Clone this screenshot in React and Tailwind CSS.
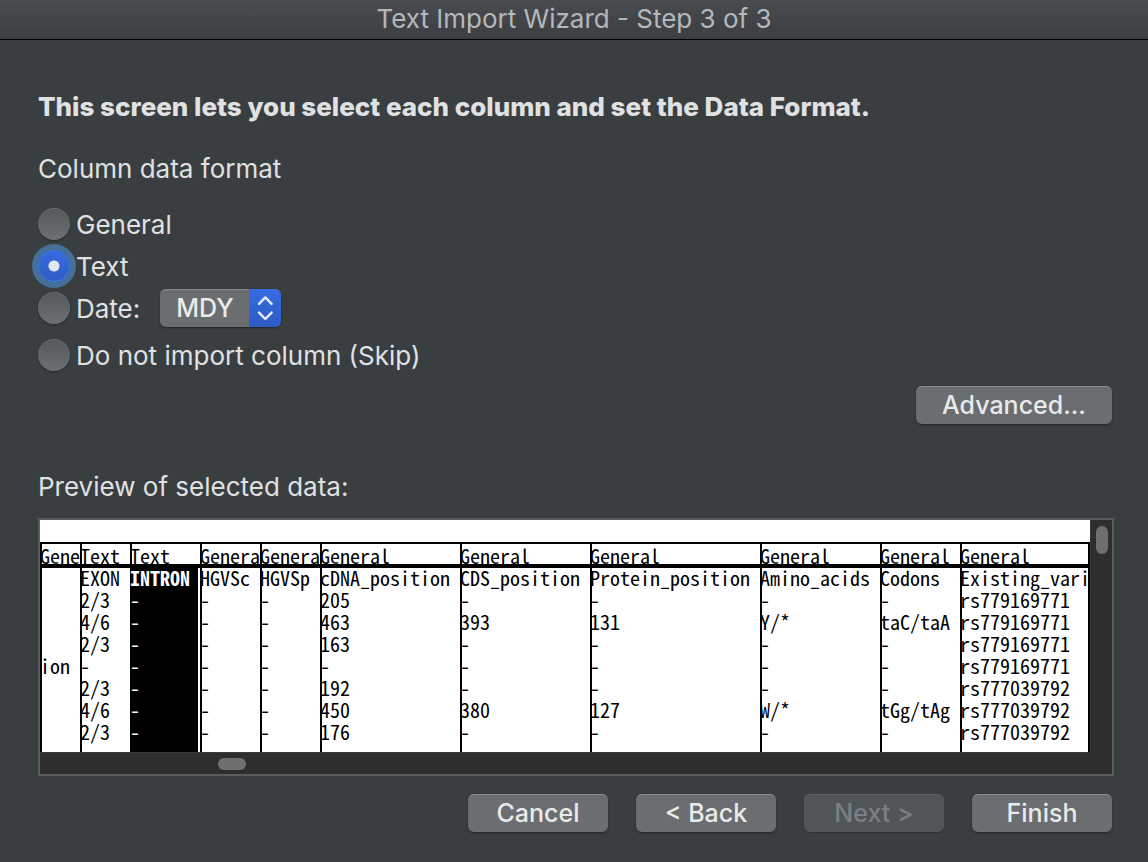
import { useState } from "react";

const columns = [
  { type: "General", width: "w-[40px]", cells: ["", "", "", "", "ion", "", "", ""], narrow: true },
  { type: "Text", width: "w-[50px]", cells: ["EXON", "2/3", "4/6", "2/3", "-", "2/3", "4/6", "2/3"] },
  { type: "Text", width: "w-[70px]", cells: ["INTRON", "-", "-", "-", "-", "-", "-", "-"], selected: true },
  { type: "General", width: "w-[60px]", cells: ["HGVSc", "-", "-", "-", "-", "-", "-", "-"], narrow: true },
  { type: "General", width: "w-[60px]", cells: ["HGVSp", "-", "-", "-", "-", "-", "-", "-"], narrow: true },
  { type: "General", width: "w-[140px]", cells: ["cDNA_position", "205", "463", "163", "-", "192", "450", "176"] },
  { type: "General", width: "w-[130px]", cells: ["CDS_position", "-", "393", "-", "-", "-", "380", "-"] },
  { type: "General", width: "w-[170px]", cells: ["Protein_position", "-", "131", "-", "-", "-", "127", "-"] },
  { type: "General", width: "w-[120px]", cells: ["Amino_acids", "-", "Y/*", "-", "-", "-", "W/*", "-"] },
  { type: "General", width: "w-[80px]", cells: ["Codons", "-", "taC/taA", "-", "-", "-", "tGg/tAg", "-"] },
  {
    type: "General",
    width: "",
    cells: ["Existing_vari", "rs779169771", "rs779169771", "rs779169771", "rs779169771", "rs777039792", "rs777039792", "rs777039792"],
  },
];

const rowCount = 8;

function Radio({ id, label, checked, onSelect }) {
  return (
    <div className="flex h-8 items-center gap-[6px]">
      <input
        id={id}
        type="radio"
        name="format"
        checked={checked}
        onChange={onSelect}
        className="size-8 shrink-0 appearance-none rounded-full bg-linear-to-b from-[#54585a] to-[#6e7173] shadow-[0_1px_2px_rgba(0,0,0,0.35),inset_0_1px_0_rgba(255,255,255,0.12)] checked:bg-[radial-gradient(circle,#dfe6f8_0_5px,transparent_6px),linear-gradient(#366be0,#2f5cc6)] checked:shadow-[inset_0_0_0_1px_#3f7fe6,0_0_0_6px_#44709a]"
      />
      <label htmlFor={id} className="pt-[2px]">
        {label}
      </label>
    </div>
  );
}

function PushButton({ children, className, disabled }) {
  const tone = disabled
    ? "bg-[#505558] text-[#7b7f82] shadow-[0_1px_1px_rgba(0,0,0,0.2),inset_0_1px_0_#5b6063]"
    : "bg-[#6a6e70] text-[#e9eaea] shadow-[0_1px_2px_rgba(0,0,0,0.4),inset_0_2px_0_-1px_#8a8d8f]";
  return (
    <button type="button" disabled={disabled} className={`h-[38px] rounded-md text-[25px] font-medium ${tone} ${className}`}>
      {children}
    </button>
  );
}

function PreviewTable() {
  return (
    <table className="h-full w-full table-fixed border-collapse font-['Noto_Sans_Mono_CJK_SC','DejaVu_Sans_Mono',monospace] text-[20px] leading-[20px] font-normal text-black">
      <colgroup>
        {columns.map((c, i) => (
          <col key={i} className={c.width} />
        ))}
      </colgroup>
      <thead>
        <tr className="h-[26px]">
          {columns.map((c, i) => (
            <th
              key={i}
              scope="col"
              className={`p-0 pt-1 text-left align-top font-normal whitespace-nowrap shadow-[inset_2px_2px_0_#000,inset_0_-4px_0_#000] last:shadow-[inset_2px_2px_0_#000,inset_-2px_-4px_0_#000] ${c.narrow ? "overflow-hidden" : ""}`}
            >
              {c.type}
            </th>
          ))}
        </tr>
      </thead>
      <tbody>
        {Array.from({ length: rowCount }, (_, r) => (
          <tr key={r} className="h-[22px]">
            {columns.map((c, i) => (
              <td
                key={i}
                className={
                  c.selected
                    ? `bg-black p-0 align-top whitespace-nowrap text-white shadow-[inset_-2px_0_0_#fff] ${r === 0 ? "font-bold" : ""}`
                    : "p-0 align-top whitespace-nowrap shadow-[inset_2px_0_0_#000] last:shadow-[inset_2px_0_0_#000,inset_-2px_0_0_#000]"
                }
              >
                {c.cells[r]}
              </td>
            ))}
          </tr>
        ))}
        <tr className="h-2">
          {columns.map((c, i) => (
            <td
              key={i}
              className={
                c.selected
                  ? "bg-black p-0 shadow-[inset_-2px_0_0_#fff]"
                  : "p-0 shadow-[inset_2px_0_0_#000] last:shadow-[inset_2px_0_0_#000,inset_-2px_0_0_#000]"
              }
            />
          ))}
        </tr>
      </tbody>
    </table>
  );
}

export default function App() {
  const [format, setFormat] = useState("text");
  const [order, setOrder] = useState("MDY");

  return (
    <div className="flex min-h-screen flex-col bg-[#393e41] font-['Inter','Liberation_Sans',sans-serif] text-[26px] leading-[30px] text-[#e0e1e1]">
      <header className="flex h-10 items-center justify-center border-b border-black bg-linear-to-b from-[#484c50] to-[#3b3f42] pb-[2px] text-[#b4b8bb]">
        Text Import Wizard - Step 3 of 3
      </header>

      <main className="flex flex-col pt-[52px] pr-[34px] pb-[30px] pl-[38px]">
        <h1 className="font-extrabold">This screen lets you select each column and set the Data Format.</h1>

        <fieldset className="mt-8">
          <legend>Column data format</legend>
          <div className="mt-6 flex flex-col">
            <Radio id="general" label="General" checked={format === "general"} onSelect={() => setFormat("general")} />
            <div className="mt-[10px]">
              <Radio id="text" label="Text" checked={format === "text"} onSelect={() => setFormat("text")} />
            </div>
            <div className="mt-[7px] flex items-center gap-5">
              <Radio id="date" label="Date:" checked={format === "date"} onSelect={() => setFormat("date")} />
              <div className="relative">
                <select
                  aria-label="Date order"
                  value={order}
                  onChange={(e) => setOrder(e.target.value)}
                  className="block h-[38px] w-[121px] appearance-none rounded-md bg-[#6a6e70] pl-4 text-[25px] font-medium text-[#e9eaea] shadow-[0_1px_2px_rgba(0,0,0,0.4),inset_0_2px_0_-1px_#8a8d8f]"
                >
                  {["MDY", "DMY", "YMD", "MYD", "DYM", "YDM"].map((o) => (
                    <option key={o}>{o}</option>
                  ))}
                </select>
                <span className="pointer-events-none absolute inset-y-0 right-0 w-8 rounded-r-md bg-linear-to-b from-[#366be0] to-[#2d5bc6]">
                  <svg
                    viewBox="0 0 32 38"
                    className="size-full"
                    fill="none"
                    stroke="#e6ecfa"
                    strokeWidth="2.4"
                    strokeLinecap="round"
                    strokeLinejoin="round"
                  >
                    <path d="M10 14.8 16.3 8.4 22.6 14.8M10 23.6l6.3 6.4 6.3-6.4" />
                  </svg>
                </span>
              </div>
            </div>
            <div className="mt-3">
              <Radio
                id="skip"
                label="Do not import column (Skip)"
                checked={format === "skip"}
                onSelect={() => setFormat("skip")}
              />
            </div>
          </div>
        </fieldset>

        <div className="mt-[15px] flex justify-end pr-[2px]">
          <PushButton className="w-[196px]">Advanced...</PushButton>
        </div>

        <h2 className="mt-12">Preview of selected data:</h2>
        <section
          aria-label="Preview"
          className="mt-4 grid grid-cols-[minmax(0,1fr)_22px] grid-rows-[auto_22px] border-2 border-[#5a5b5c] bg-[#2e2e2e]"
        >
          <div className="overflow-hidden bg-white pt-[22px]">
            <PreviewTable />
          </div>
          <div className="flex justify-center border-l border-[#3a3a3a] pt-[6px]">
            <div className="h-7 w-3 rounded-full bg-[#6f6f6f]" />
          </div>
          <div className="flex items-center border-t border-[#3a3a3a] pl-[178px]">
            <div className="h-3 w-7 rounded-full bg-[#6f6f6f]" />
          </div>
        </section>

        <footer className="mt-[18px] flex justify-end gap-7 pr-[2px]">
          <PushButton className="w-[140px]">Cancel</PushButton>
          <PushButton className="w-[140px]">&lt; Back</PushButton>
          <PushButton className="w-[140px]" disabled>
            Next &gt;
          </PushButton>
          <PushButton className="w-[140px]">Finish</PushButton>
        </footer>
      </main>
    </div>
  );
}
